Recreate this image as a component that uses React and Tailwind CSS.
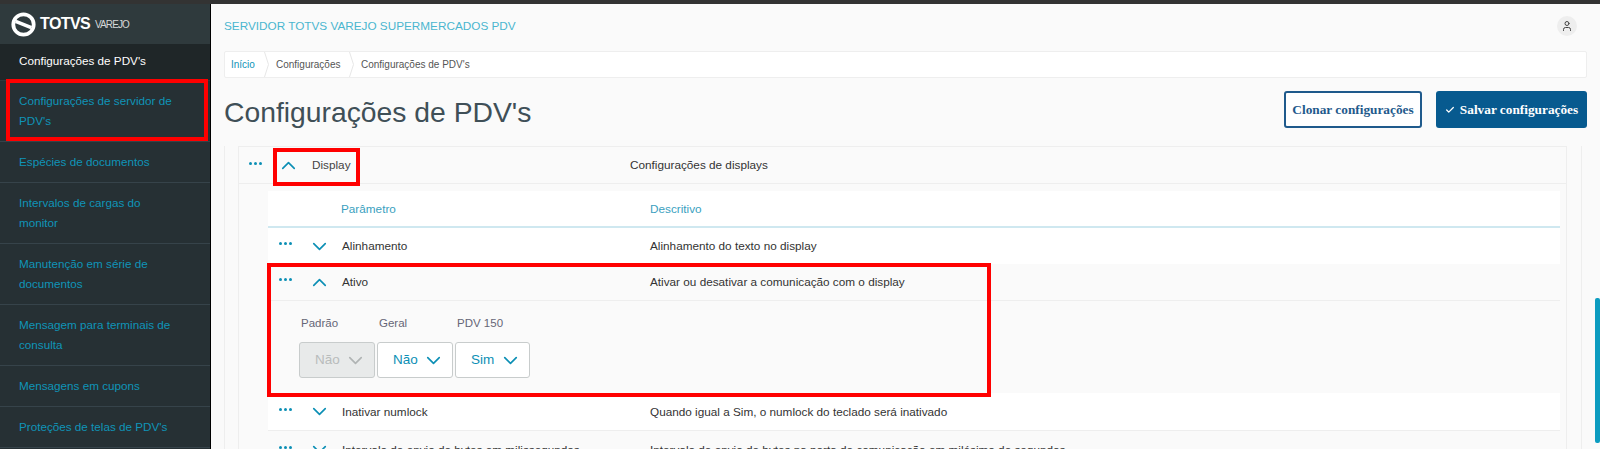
import { ChevronDown, ChevronUp, Check, User } from "lucide-react";

const menu = [
  ["Configurações de servidor de", "PDV's"],
  ["Espécies de documentos"],
  ["Intervalos de cargas do", "monitor"],
  ["Manutenção em série de", "documentos"],
  ["Mensagem para terminais de", "consulta"],
  ["Mensagens em cupons"],
  ["Proteções de telas de PDV's"],
  ["Proteções de telas"],
];

const Dots = () => (
  <span className="flex gap-[2px] w-[14px]">
    <i className="w-[3px] h-[3px] rounded-full bg-[#0c8fb5]" />
    <i className="w-[3px] h-[3px] rounded-full bg-[#0c8fb5]" />
    <i className="w-[3px] h-[3px] rounded-full bg-[#0c8fb5]" />
  </span>
);

const Logo = () => (
  <svg width="25" height="25" viewBox="0 0 24 24" fill="none">
    <circle cx="12" cy="12" r="9.8" stroke="#fff" strokeWidth="3.6" />
    <path d="M4.5 9 L19.5 15" stroke="#fff" strokeWidth="3.6" />
  </svg>
);

const Crumb = () => (
  <svg width="5" height="25" viewBox="0 0 5 25" fill="none" className="shrink-0">
    <path d="M0.5 0 L4.5 12.5 L0.5 25" stroke="#e6e6e6" />
  </svg>
);

const Row = ({ name, desc, open, className = "h-[37px]" }) => (
  <div className={`flex items-center ${className} ${open ? "border-b border-[#eeeeee]" : ""}`}>
    <span className="ml-[11px] w-[31px] -mt-[5px]"><Dots /></span>
    {open ? (
      <ChevronUp className="w-[23px] h-[23px] -mx-[2px] text-[#0c8fb5]" strokeWidth={1.7} />
    ) : (
      <ChevronDown className="w-[23px] h-[23px] -mx-[2px] text-[#0c8fb5]" strokeWidth={1.7} />
    )}
    <span className="ml-[13px] w-[308px] text-[11.75px] text-[#333]">{name}</span>
    <span className="text-[11.75px] text-[#333] whitespace-nowrap">{desc}</span>
  </div>
);

const Select = ({ label, value, width, disabled }) => (
  <div className="flex flex-col">
    <span className="text-[11.5px] text-[#667] h-[28px] pl-[2px] pt-[1px]">{label}</span>
    <div
      className={`flex items-center justify-between h-[36px] rounded-[3px] border border-[#c8cccc] text-[13.5px] ${width} ${
        disabled ? "bg-[#e8eaea] text-[#b8bcbc]" : "bg-white text-[#0c8fb5]"
      } pl-[15px] pr-[7px]`}
    >
      {value}
      <ChevronDown className={`w-[23px] h-[23px] ${disabled ? "text-[#b0b4b4]" : "text-[#0c8fb5]"}`} strokeWidth={1.7} />
    </div>
  </div>
);

export default function App() {
  return (
    <div className="relative h-[449px] overflow-hidden flex flex-col bg-[#fafafa] font-['Liberation_Sans',Arial,sans-serif]">
      <div className="h-[4px] bg-[#333333] shrink-0" />
      <div className="flex flex-1 min-h-0">
        <aside className="w-[211px] shrink-0 bg-[#263034] border-r border-black overflow-hidden">
          <div className="h-[40px] bg-[#2f3a3d] flex items-center pl-[11px]">
            <Logo />
            <span className="ml-[4px] text-white font-bold text-[16px] tracking-[-0.6px]">TOTVS</span>
            <span className="ml-[5px] text-[#d5d8d8] text-[10px] tracking-[-0.9px]">VAREJO</span>
          </div>
          <div className="h-[37px] bg-[#1f2628] flex items-center pl-[19px] pb-[3px] text-[11.7px] text-white border-b border-[#2f3a3d]">Configurações de PDV's</div>
          {menu.map((m) => (
            <div key={m[0]} className="border-b border-[#36434a] pl-[19px] py-[10px] text-[11.7px] leading-[20px] text-[#0f94b8]">
              {m.map((l) => <div key={l}>{l}</div>)}
            </div>
          ))}
        </aside>

        <main className="flex-1 min-w-0 pl-[13px] pr-[13px]">
          <div className="flex items-center justify-between h-[43px] mb-[4px]">
            <span className="text-[11.75px] text-[#4ab6cf]">SERVIDOR TOTVS VAREJO SUPERMERCADOS PDV</span>
            <span className="flex items-center justify-center w-[20px] h-[20px] mr-[10px] rounded-full bg-[#eeeeee]">
              <User className="w-[12px] h-[12px] text-[#444]" />
            </span>
          </div>
          <nav className="flex items-center h-[27px] bg-white border border-[#eeeeee] rounded-[2px] text-[10px] text-[#555]">
            <span className="pl-[6px] pr-[8px] w-[39px] text-[#0f94b8]">Início</span>
            <Crumb />
            <span className="pl-[7px] w-[80px]">Configurações</span>
            <Crumb />
            <span className="pl-[7px]">Configurações de PDV's</span>
          </nav>
          <div className="flex items-center justify-between h-[37px] mt-[13px]">
            <h1 className="text-[28.3px] text-[#3f4f57] leading-none pt-[6px]">Configurações de PDV's</h1>
            <div className="flex gap-[14px] font-['Liberation_Serif',serif] font-bold text-[13.3px]">
              <button className="w-[138px] h-[37px] bg-white border-2 border-[#1f5a8c] rounded-[3px] text-[#1f5a8c]">Clonar configurações</button>
              <button className="flex items-center justify-center gap-[5px] w-[151px] h-[37px] bg-[#075a8f] rounded-[3px] text-white">
                <Check className="w-[10px] h-[10px]" strokeWidth={3} />
                Salvar configurações
              </button>
            </div>
          </div>

          <div className="mt-[18px] mr-[5px] h-[320px] border-x border-[#eeeeee] pl-[13px] pr-[14px]">
            <section className="h-full border-t border-x border-[#eeeeee]">
              <div className="flex items-center h-[37px] border-b border-[#eeeeee]">
                <span className="ml-[10px] w-[30px] -mt-[3px]"><Dots /></span>
                <ChevronUp className="w-[23px] h-[23px] -mx-[2px] text-[#0c8fb5]" strokeWidth={1.7} />
                <span className="ml-[14px] w-[318px] text-[11.75px] text-[#444]">Display</span>
                <span className="text-[11.75px] text-[#333]">Configurações de displays</span>
              </div>
              <div className="ml-[29px] mr-[6px] mt-[7px] bg-white">
                <div className="flex items-center h-[37px] border-b-2 border-[#cfe8f0] text-[11.75px] text-[#3a9fc0]">
                  <span className="ml-[73px] w-[309px]">Parâmetro</span>
                  <span>Descritivo</span>
                </div>
                <Row name="Alinhamento" desc="Alinhamento do texto no display" className="h-[36px]" />
                <div className="bg-[#fafafa]">
                  <Row name="Ativo" desc="Ativar ou desativar a comunicação com o display" open />
                  <div className="flex gap-[2px] pl-[31px] pt-[13px] h-[92px]">
                    <Select label="Padrão" value="Não" width="w-[76px]" disabled />
                    <Select label="Geral" value="Não" width="w-[76px]" />
                    <Select label="PDV 150" value="Sim" width="w-[75px]" />
                  </div>
                </div>
                <Row name="Inativar numlock" desc="Quando igual a Sim, o numlock do teclado será inativado" />
                <div className="bg-[#fafafa] border-t border-[#eeeeee]">
                  <Row name="Intervalo de envio de bytes em milissegundos" desc="Intervalo de envio de bytes na porta de comunicação em milésimo de segundos" />
                </div>
              </div>
            </section>
          </div>
        </main>
      </div>

      <div className="absolute right-0 top-[298px] w-[5px] h-[145px] bg-[#0c9cc0] rounded-[2px]" />
      <div className="absolute left-[6px] top-[79px] w-[202px] h-[62px] border-4 border-[#ff0000]" />
      <div className="absolute left-[273px] top-[148px] w-[87px] h-[38px] border-4 border-[#ff0000]" />
      <div className="absolute left-[267px] top-[263px] w-[724px] h-[134px] border-4 border-[#ff0000]" />
    </div>
  );
}
